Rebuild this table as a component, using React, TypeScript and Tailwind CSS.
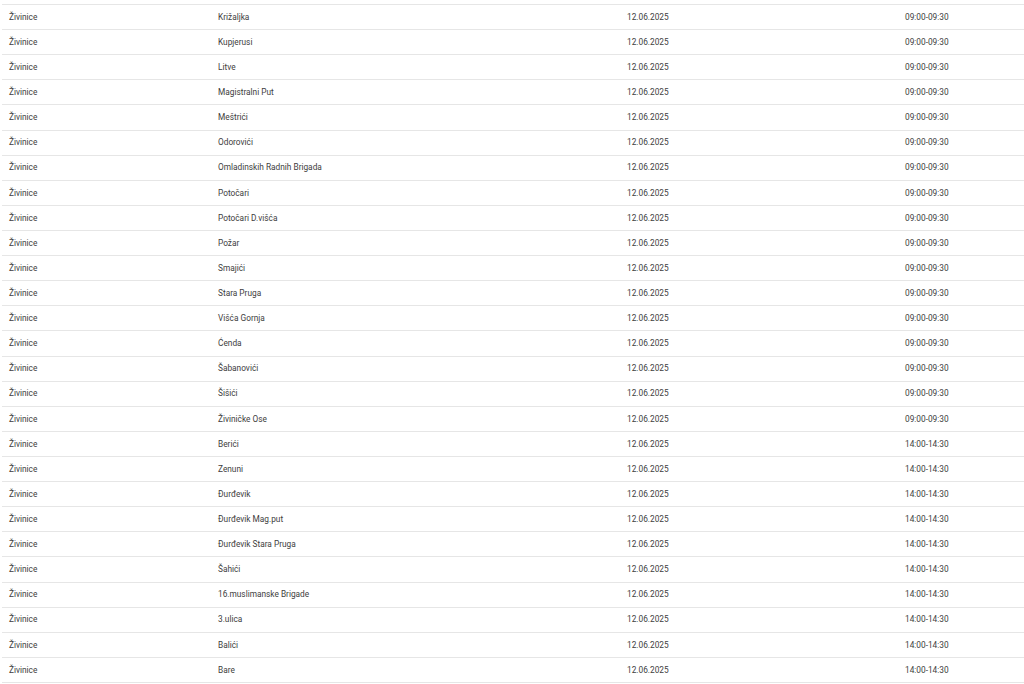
const rows: [string, string][] = [
  ["Križaljka", "09:00-09:30"],
  ["Kupjerusi", "09:00-09:30"],
  ["Litve", "09:00-09:30"],
  ["Magistralni Put", "09:00-09:30"],
  ["Meštrići", "09:00-09:30"],
  ["Odorovići", "09:00-09:30"],
  ["Omladinskih Radnih Brigada", "09:00-09:30"],
  ["Potočari", "09:00-09:30"],
  ["Potočari D.višća", "09:00-09:30"],
  ["Požar", "09:00-09:30"],
  ["Smajići", "09:00-09:30"],
  ["Stara Pruga", "09:00-09:30"],
  ["Višća Gornja", "09:00-09:30"],
  ["Ćenda", "09:00-09:30"],
  ["Šabanovići", "09:00-09:30"],
  ["Šišići", "09:00-09:30"],
  ["Živiničke Ose", "09:00-09:30"],
  ["Berići", "14:00-14:30"],
  ["Zenuni", "14:00-14:30"],
  ["Đurđevik", "14:00-14:30"],
  ["Đurđevik Mag.put", "14:00-14:30"],
  ["Đurđevik Stara Pruga", "14:00-14:30"],
  ["Šahići", "14:00-14:30"],
  ["16.muslimanske Brigade", "14:00-14:30"],
  ["3.ulica", "14:00-14:30"],
  ["Balići", "14:00-14:30"],
  ["Bare", "14:00-14:30"],
];

export default function App() {
  return (
    <div className="min-h-screen bg-white pt-[4px] pl-[2px] font-['Roboto',sans-serif] text-[8.3px] text-[#3d3d3d]">
      <div className="border-t border-[#e6e6e6]">
        {rows.map(([place, time], i) => (
          <div
            key={i}
            className="grid h-[25.12px] grid-cols-[209px_409px_278px_1fr] items-center border-b border-[#e6e6e6]"
          >
            <div className="pl-[7px]">Živinice</div>
            <div className="pl-[7px]">{place}</div>
            <div className="pl-[7px]">12.06.2025</div>
            <div className="pl-[7px]">{time}</div>
          </div>
        ))}
      </div>
    </div>
  );
}
